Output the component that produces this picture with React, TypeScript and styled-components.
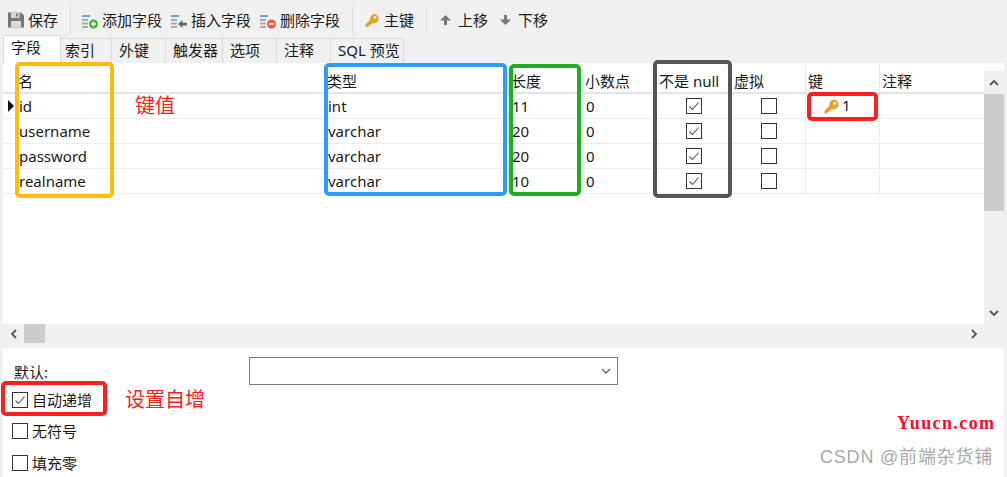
import React from "react";
import styled, { createGlobalStyle } from "styled-components";

const Global = createGlobalStyle`
  html, body { margin: 0; padding: 0; background: #f0f0f0; }
  #root { width: 1007px; height: 477px; overflow: hidden; }
`;

const FONT = `"Noto Sans", "Noto Sans CJK SC", sans-serif`;

const Page = styled.div`
  position: relative;
  width: 1007px;
  height: 477px;
  background: #f0f0f0;
  font-family: ${FONT};
  font-size: 15px;
  color: #1a1a1a;
  overflow: hidden;
`;

const Toolbar = styled.div`
  height: 37px;
  display: flex;
  align-items: center;
  padding-left: 8px;
  padding-top: 3px;
  box-sizing: border-box;
`;
const ToolButton = styled.div<{ $w: number; $gap?: number }>`
  width: ${(p) => p.$w}px;
  flex: none;
  display: flex;
  align-items: center;
  gap: ${(p) => p.$gap ?? 4}px;
  white-space: nowrap;
  line-height: 20px;
`;
const ToolSep = styled.div<{ $ml: number; $mr: number }>`
  width: 1px;
  height: 26px;
  background: #dcdcdc;
  flex: none;
  margin-left: ${(p) => p.$ml}px;
  margin-right: ${(p) => p.$mr}px;
`;
const ListSvg = styled.svg`
  flex: none;
  margin-top: 3px;
`;

const Tabs = styled.div`
  height: 26px;
  display: flex;
  align-items: flex-end;
  padding-left: 3px;
`;
const Tab = styled.div<{ $w: number; $pad?: number; $active?: boolean }>`
  width: ${(p) => p.$w}px;
  height: ${(p) => (p.$active ? 28 : 25)}px;
  box-sizing: border-box;
  flex: none;
  background: ${(p) => (p.$active ? "#fff" : "#f0f0f0")};
  border: 1px solid #dcdcdc;
  border-left-width: ${(p) => (p.$active ? 1 : 0)}px;
  border-bottom: 0;
  padding-left: ${(p) => p.$pad ?? 7}px;
  line-height: 23px;
  white-space: nowrap;
  margin-top: ${(p) => (p.$active ? -3 : 0)}px;
`;

const GridArea = styled.div`
  margin: 0 3px 0 3px;
  height: 261px;
  background: #fff;
  display: flex;
`;
const Table = styled.div`
  flex: 1;
  min-width: 0;
`;
const COLS = "13px 309px 184px 74px 74px 75px 74px 74px 1fr";
const HeadRow = styled.div`
  display: grid;
  grid-template-columns: ${COLS};
  height: 31px;
  box-sizing: border-box;
  border-bottom: 2px solid #e3e3e3;
`;
const Row = styled.div`
  display: grid;
  grid-template-columns: ${COLS};
  height: 25px;
  box-sizing: border-box;
  border-bottom: 1px solid #ececec;
`;
const HeadCell = styled.div`
  border-right: 1px solid #e6e6e6;
  padding: 7px 0 0 2px;
  line-height: 20px;
  white-space: nowrap;
  overflow: hidden;
  margin-top: 1px;
  &:last-child { border-right: 0; }
`;
const Cell = styled.div<{ $center?: boolean }>`
  border-right: 1px solid #ececec;
  padding-left: ${(p) => (p.$center ? 0 : 3)}px;
  display: flex;
  align-items: center;
  justify-content: ${(p) => (p.$center ? "center" : "flex-start")};
  white-space: nowrap;
  line-height: 20px;
  &:last-child { border-right: 0; }
`;
const Indicator = styled.div`
  border-right: 1px solid #ececec;
  display: flex;
  align-items: center;
  padding-left: 5px;
`;
const Pointer = styled.div`
  width: 0;
  height: 0;
  border-left: 6px solid #111;
  border-top: 6px solid transparent;
  border-bottom: 6px solid transparent;
`;
const KeyCell = styled(Cell)`
  padding-left: 18px;
  gap: 3px;
`;
const KeyNumber = styled.span`
  margin-bottom: 3px;
`;

const Box = styled.div`
  width: 16px;
  height: 16px;
  flex: none;
  box-sizing: border-box;
  border: 1px solid #333;
  background: #fff;
  display: flex;
  align-items: center;
  justify-content: center;
`;

const VScroll = styled.div`
  width: 20px;
  flex: none;
  margin-top: 8px;
  background: #f0f0f0;
  display: flex;
  flex-direction: column;
  align-items: stretch;
`;
const VBtn = styled.div`
  height: 23px;
  flex: none;
  display: flex;
  align-items: center;
  justify-content: center;
`;
const VThumb = styled.div`
  height: 117px;
  flex: none;
  background: #cdcdcd;
`;
const Spacer = styled.div`
  flex: 1;
`;

const HScroll = styled.div`
  height: 24px;
  margin: 0 3px;
  background: #f0f0f0;
  display: flex;
  align-items: flex-start;
`;
const HBtn = styled.div<{ $w: number }>`
  width: ${(p) => p.$w}px;
  height: 19px;
  flex: none;
  display: flex;
  align-items: center;
  justify-content: center;
`;
const HThumb = styled.div`
  width: 21px;
  height: 19px;
  flex: none;
  background: #cdcdcd;
`;

const Form = styled.div`
  margin: 0 3px;
  height: 129px;
  background: #fff;
  box-sizing: border-box;
  padding: 9px 0 0 9px;
  display: flex;
  flex-direction: column;
`;
const DefaultRow = styled.div`
  display: flex;
  flex: none;
  height: 28px;
  align-items: flex-start;
`;
const DefaultLabel = styled.div`
  width: 235px;
  flex: none;
  padding: 5px 0 0 2px;
  line-height: 20px;
  font-size: 15px;
`;
const Select = styled.div`
  width: 369px;
  height: 28px;
  box-sizing: border-box;
  border: 1px solid #7a7a7a;
  background: #fff;
  display: flex;
  align-items: center;
  justify-content: flex-end;
  padding-right: 6px;
`;
const CheckRow = styled.div<{ $h: number }>`
  height: ${(p) => p.$h}px;
  flex: none;
  display: flex;
  align-items: center;
  gap: 4px;
  line-height: 20px;
  font-size: 15px;
`;

const Outline = styled.div<{ $c: string; $x: number; $y: number; $w: number; $h: number }>`
  position: absolute;
  left: ${(p) => p.$x}px;
  top: ${(p) => p.$y}px;
  width: ${(p) => p.$w}px;
  height: ${(p) => p.$h}px;
  box-sizing: border-box;
  border: 4px solid ${(p) => p.$c};
  border-radius: 5px;
  pointer-events: none;
`;
const Note = styled.div<{ $x: number; $y: number }>`
  position: absolute;
  left: ${(p) => p.$x}px;
  top: ${(p) => p.$y}px;
  color: #fb2020;
  font-size: 20px;
  line-height: 26px;
  white-space: nowrap;
`;
const Yuucn = styled.div`
  position: absolute;
  left: 897px;
  top: 413px;
  color: #fb0a2a;
  font-family: "Liberation Serif", serif;
  font-weight: 700;
  font-size: 18px;
  letter-spacing: 1.4px;
  line-height: 20px;
`;
const Csdn = styled.div`
  position: absolute;
  left: 820px;
  top: 445px;
  color: #a9a9a9;
  font-family: "Liberation Sans", "Noto Sans CJK SC", sans-serif;
  font-size: 18px;
  letter-spacing: 0.8px;
  line-height: 24px;
  white-space: nowrap;
`;

const Save = () => (
  <svg width="16" height="16" viewBox="0 0 16 16">
    <path d="M0 0.5h13l3 3v12H0z" fill="#777" />
    <rect x="3" y="0.5" width="8.5" height="5.5" fill="#d6d6d6" />
    <rect x="8" y="1.5" width="2" height="3" fill="#777" />
    <rect x="3" y="9" width="10" height="6.5" fill="#dadada" />
  </svg>
);
const Lines = () => (
  <>
    <rect x="0" y="0" width="8" height="2" fill="#5aa9e6" />
    <rect x="0" y="4" width="6" height="2" fill="#ababab" />
    <rect x="0" y="7.5" width="6" height="2" fill="#ababab" />
    <rect x="0" y="11" width="6" height="2" fill="#ababab" />
  </>
);
const AddIcon = () => (
  <ListSvg width="16" height="14" viewBox="0 0 16 14">
    <Lines />
    <circle cx="11.5" cy="9" r="4.5" fill="#4caf3a" />
    <path d="M9 9h5M11.5 6.5v5" stroke="#fff" strokeWidth="1.6" />
  </ListSvg>
);
const InsertIcon = () => (
  <ListSvg width="16" height="14" viewBox="0 0 16 14">
    <Lines />
    <path d="M7 9l4.5-4v2.8H16v2.6h-4.5V13z" fill="#666" />
  </ListSvg>
);
const DeleteIcon = () => (
  <ListSvg width="16" height="14" viewBox="0 0 16 14">
    <Lines />
    <circle cx="11.5" cy="9" r="4.5" fill="#ee5a4a" />
    <path d="M9 9h5" stroke="#fff" strokeWidth="1.8" />
  </ListSvg>
);
const KeyIcon = ({ s = 15, hole = "#f0f0f0" }: { s?: number; hole?: string }) => (
  <svg width={s} height={s} viewBox="0 0 15 15">
    <path
      d="M9.500.5a5 5 0 0 1 0 10c-.6 0-1.100-.1-1.600-.3L6.400 11.700H5V13H3.600v1.500H1A.6.6 0 0 1 .5 14v-2.200l5.200-5.200A5 5 0 0 1 9.500.5z"
      fill="#e5a227"
    />
    <circle cx="10.800" cy="4.200" r="1.500" fill={hole} />
  </svg>
);
const UpMove = () => (
  <svg width="11" height="10" viewBox="0 0 11 10">
    <path d="M5.500 0L11 5.500H7V10H4V5.500H0z" fill="#777" />
  </svg>
);
const DownMove = () => (
  <svg width="11" height="10" viewBox="0 0 11 10">
    <path d="M5.500 10L11 4.500H7V0H4V4.500H0z" fill="#777" />
  </svg>
);
const Chevron = ({ r, sw = 1.8 }: { r: number; sw?: number }) => (
  <svg width="10" height="10" viewBox="0 0 10 10" style={{ transform: `rotate(${r}deg)` }}>
    <path d="M1 7l4-4 4 4" stroke="#555" strokeWidth={sw} fill="none" />
  </svg>
);
const Tick = () => (
  <svg width="12" height="12" viewBox="0 0 12 12">
    <path d="M1.500 6.500l3 3 6-7" stroke="#555" strokeWidth="1.1" fill="none" />
  </svg>
);
const Check = ({ on }: { on?: boolean }) => <Box>{on && <Tick />}</Box>;

const rows = [
  { name: "id", type: "int", len: "11", key: true },
  { name: "username", type: "varchar", len: "20" },
  { name: "password", type: "varchar", len: "20" },
  { name: "realname", type: "varchar", len: "10" },
];
const heads = ["", "名", "类型", "长度", "小数点", "不是 null", "虚拟", "键", "注释"];
const tabs: [string, number, number][] = [
  ["索引", 51, 4],
  ["外键", 54, 7],
  ["触发器", 57, 7],
  ["选项", 54, 7],
  ["注释", 54, 7],
  ["SQL 预览", 73, 7],
];

export default function App() {
  return (
    <Page>
      <Global />
      <Toolbar>
        <ToolButton $w={56}><Save />保存</ToolButton>
        <ToolSep $ml={6} $mr={11} />
        <ToolButton $w={89}><AddIcon />添加字段</ToolButton>
        <ToolButton $w={89}><InsertIcon />插入字段</ToolButton>
        <ToolButton $w={80}><DeleteIcon />删除字段</ToolButton>
        <ToolSep $ml={12} $mr={12} />
        <ToolButton $w={49} $gap={5}><KeyIcon />主键</ToolButton>
        <ToolSep $ml={12} $mr={13} />
        <ToolButton $w={60} $gap={7}><UpMove />上移</ToolButton>
        <ToolButton $w={60} $gap={7}><DownMove />下移</ToolButton>
      </Toolbar>
      <Tabs>
        <Tab $w={58} $active>字段</Tab>
        {tabs.map(([t, w, pad]) => (
          <Tab key={t} $w={w} $pad={pad}>{t}</Tab>
        ))}
      </Tabs>
      <GridArea>
        <Table>
          <HeadRow>
            {heads.map((h, i) => (
              <HeadCell key={i}>{h}</HeadCell>
            ))}
          </HeadRow>
          {rows.map((r, i) => (
            <Row key={r.name}>
              <Indicator>{i === 0 && <Pointer />}</Indicator>
              <Cell>{r.name}</Cell>
              <Cell>{r.type}</Cell>
              <Cell>{r.len}</Cell>
              <Cell>0</Cell>
              <Cell $center><Check on /></Cell>
              <Cell $center><Check /></Cell>
              {r.key ? (
                <KeyCell><KeyIcon hole="#fff" /><KeyNumber>1</KeyNumber></KeyCell>
              ) : (
                <Cell />
              )}
              <Cell />
            </Row>
          ))}
        </Table>
        <VScroll>
          <VBtn><Chevron r={0} /></VBtn>
          <VThumb />
          <Spacer />
          <VBtn><Chevron r={180} /></VBtn>
        </VScroll>
      </GridArea>
      <HScroll>
        <HBtn $w={21}><Chevron r={-90} /></HBtn>
        <HThumb />
        <Spacer />
        <HBtn $w={20}><Chevron r={90} /></HBtn>
        <HBtn $w={20} />
      </HScroll>
      <Form>
        <DefaultRow>
          <DefaultLabel>默认:</DefaultLabel>
          <Select><Chevron r={180} sw={1.1} /></Select>
        </DefaultRow>
        <CheckRow $h={30}><Check on />自动递增</CheckRow>
        <CheckRow $h={32}><Check />无符号</CheckRow>
        <CheckRow $h={32}><Check />填充零</CheckRow>
      </Form>
      <Outline $c="#ffbd0a" $x={15} $y={62} $w={99} $h={136} />
      <Outline $c="#2a9dff" $x={324} $y={63} $w={183} $h={133} />
      <Outline $c="#21ad21" $x={509} $y={64} $w={72} $h={132} />
      <Outline $c="#555555" $x={653} $y={60} $w={79} $h={138} />
      <Outline $c="#fb2020" $x={807} $y={92} $w={71} $h={29} />
      <Outline $c="#fb2020" $x={1} $y={381} $w={106} $h={35} />
      <Note $x={135} $y={93}>键值</Note>
      <Note $x={125} $y={387}>设置自增</Note>
      <Yuucn>Yuucn.com</Yuucn>
      <Csdn>CSDN @前端杂货铺</Csdn>
    </Page>
  );
}
